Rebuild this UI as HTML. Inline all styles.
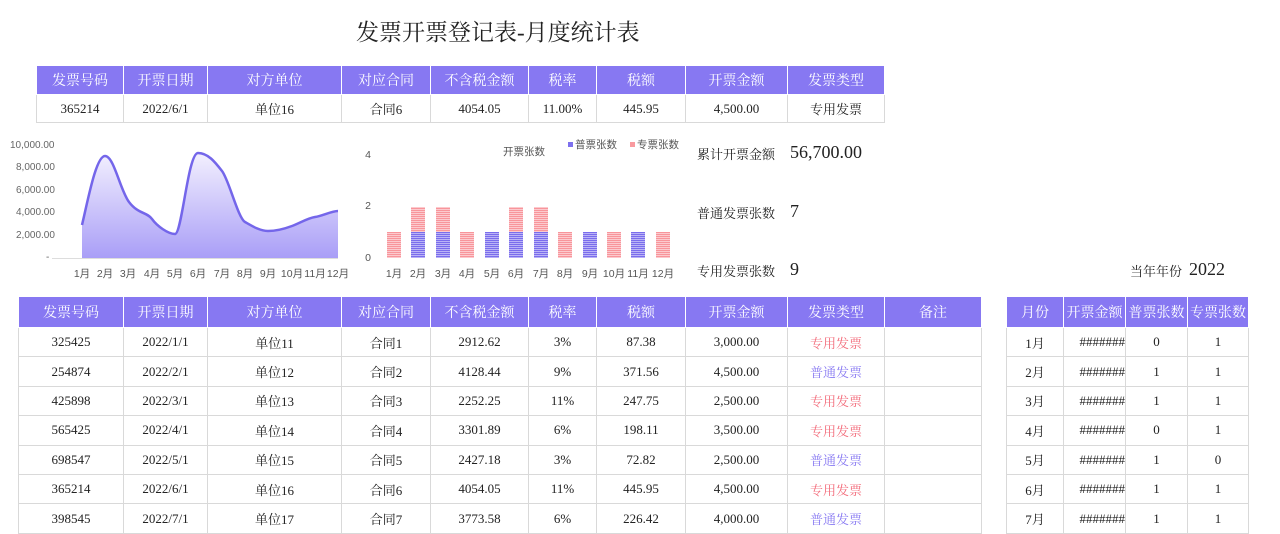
<!DOCTYPE html>
<html><head><meta charset="utf-8">
<style>
body{margin:0;width:1280px;height:530px;overflow:hidden;background:#fff;font-family:"Liberation Serif","Noto Serif CJK SC",serif;color:#222;position:relative}
.t{position:absolute;border-collapse:collapse;table-layout:fixed;font-size:13px}
.t td{border:1px solid #d9d9d9;text-align:center;padding:0;white-space:nowrap;overflow:hidden}
.t tr.h td{background:#8778f2;color:#fff;border-color:#fff;font-size:14px}
.p{color:#f36b7a}.b{color:#8778f2}
.a{position:absolute;font-size:13px;white-space:nowrap}
.s{font-family:"Liberation Sans","Noto Sans CJK SC",sans-serif;font-size:10px;color:#666;position:absolute}
</style></head><body>
<div class="a" style="left:356px;top:14px;font-size:23px;">发票开票登记表-月度统计表</div>

<table class="t" style="left:36px;top:65px;width:848px">
<colgroup><col style="width:87px"><col style="width:84px"><col style="width:134px"><col style="width:89px"><col style="width:98px"><col style="width:68px"><col style="width:89px"><col style="width:102px"><col style="width:97px"></colgroup>
<tr class="h" style="height:29px"><td>发票号码</td><td>开票日期</td><td>对方单位</td><td>对应合同</td><td>不含税金额</td><td>税率</td><td>税额</td><td>开票金额</td><td>发票类型</td></tr>
<tr style="height:28px"><td>365214</td><td>2022/6/1</td><td>单位16</td><td>合同6</td><td>4054.05</td><td>11.00%</td><td>445.95</td><td>4,500.00</td><td>专用发票</td></tr>
</table>

<div class="s" style="left:10px;top:140px">10,000.00</div>
<div class="s" style="left:16px;top:162px">8,000.00</div>
<div class="s" style="left:16px;top:185px">6,000.00</div>
<div class="s" style="left:16px;top:207px">4,000.00</div>
<div class="s" style="left:16px;top:230px">2,000.00</div>
<div class="s" style="left:46px;top:252px">-</div>
<svg style="position:absolute;left:0;top:0" width="700" height="290">
<defs><linearGradient id="g" x1="0" y1="0" x2="0" y2="1"><stop offset="0" stop-color="#f3f0fe"/><stop offset="1" stop-color="#a99ef7"/></linearGradient>
<pattern id="pp" width="4" height="2" patternUnits="userSpaceOnUse"><rect width="4" height="2" fill="#fde2e4"/><rect width="4" height="1.3" fill="#f8959b"/></pattern>
<pattern id="pb" width="4" height="2" patternUnits="userSpaceOnUse"><rect width="4" height="2" fill="#d6d1fb"/><rect width="4" height="1.3" fill="#7a6dec"/></pattern></defs>
<path d="M82,225 C88,200 96,156 105,156 S120,190 129,202 S147,212 152,219 S168,234 175,234 S188,153 198,153 S215,162 222,171 S238,218 245,222 S260,231 268,231 S284,229 292,226 S308,218 315,217 S332,211 338,211 L338,258 L82,258 Z" fill="url(#g)"/>
<path d="M82,225 C88,200 96,156 105,156 S120,190 129,202 S147,212 152,219 S168,234 175,234 S188,153 198,153 S215,162 222,171 S238,218 245,222 S260,231 268,231 S284,229 292,226 S308,218 315,217 S332,211 338,211" fill="none" stroke="#7466ea" stroke-width="2.5"/>
<line x1="52" y1="258.5" x2="338" y2="258.5" stroke="#ddd"/>
<g font-family="Liberation Sans,Noto Sans CJK SC,sans-serif" font-size="10.5" fill="#555" text-anchor="middle">
<text x="82" y="277">1月</text><text x="105" y="277">2月</text><text x="128" y="277">3月</text><text x="152" y="277">4月</text><text x="175" y="277">5月</text><text x="198" y="277">6月</text><text x="222" y="277">7月</text><text x="245" y="277">8月</text><text x="268" y="277">9月</text><text x="292" y="277">10月</text><text x="315" y="277">11月</text><text x="338" y="277">12月</text>
<text x="394" y="277">1月</text><text x="418" y="277">2月</text><text x="443" y="277">3月</text><text x="467" y="277">4月</text><text x="492" y="277">5月</text><text x="516" y="277">6月</text><text x="541" y="277">7月</text><text x="565" y="277">8月</text><text x="590" y="277">9月</text><text x="614" y="277">10月</text><text x="638" y="277">11月</text><text x="663" y="277">12月</text>
<text x="368" y="158">4</text><text x="368" y="209">2</text><text x="368" y="261">0</text>
<text x="524" y="155">开票张数</text>
<text x="596" y="148">普票张数</text><text x="658" y="148">专票张数</text>
</g>
<rect x="568" y="142" width="5" height="5" fill="#7d70ee"/><rect x="630" y="142" width="5" height="5" fill="#f99a9f"/>
<g>
<rect x="387" y="232" width="14" height="26" fill="url(#pp)"/>
<rect x="411" y="232" width="14" height="26" fill="url(#pb)"/><rect x="411" y="207" width="14" height="25" fill="url(#pp)"/>
<rect x="436" y="232" width="14" height="26" fill="url(#pb)"/><rect x="436" y="207" width="14" height="25" fill="url(#pp)"/>
<rect x="460" y="232" width="14" height="26" fill="url(#pp)"/>
<rect x="485" y="232" width="14" height="26" fill="url(#pb)"/>
<rect x="509" y="232" width="14" height="26" fill="url(#pb)"/><rect x="509" y="207" width="14" height="25" fill="url(#pp)"/>
<rect x="534" y="232" width="14" height="26" fill="url(#pb)"/><rect x="534" y="207" width="14" height="25" fill="url(#pp)"/>
<rect x="558" y="232" width="14" height="26" fill="url(#pp)"/>
<rect x="583" y="232" width="14" height="26" fill="url(#pb)"/>
<rect x="607" y="232" width="14" height="26" fill="url(#pp)"/>
<rect x="631" y="232" width="14" height="26" fill="url(#pb)"/>
<rect x="656" y="232" width="14" height="26" fill="url(#pp)"/>
</g>
</svg>

<div class="a" style="left:697px;top:144px">累计开票金额</div>
<div class="a" style="left:790px;top:142px;font-size:18px">56,700.00</div>
<div class="a" style="left:697px;top:203px">普通发票张数</div>
<div class="a" style="left:790px;top:201px;font-size:18px">7</div>
<div class="a" style="left:697px;top:261px">专用发票张数</div>
<div class="a" style="left:790px;top:259px;font-size:18px">9</div>
<div class="a" style="left:1130px;top:261px">当年年份</div>
<div class="a" style="left:1189px;top:259px;font-size:18px">2022</div>

<table class="t" style="left:18px;top:296px;width:963px">
<colgroup><col style="width:105px"><col style="width:84px"><col style="width:134px"><col style="width:89px"><col style="width:98px"><col style="width:68px"><col style="width:89px"><col style="width:102px"><col style="width:97px"><col style="width:97px"></colgroup>
<tr class="h" style="height:31px"><td>发票号码</td><td>开票日期</td><td>对方单位</td><td>对应合同</td><td>不含税金额</td><td>税率</td><td>税额</td><td>开票金额</td><td>发票类型</td><td>备注</td></tr>
<tr style="height:29.4px"><td>325425</td><td>2022/1/1</td><td>单位11</td><td>合同1</td><td>2912.62</td><td>3%</td><td>87.38</td><td>3,000.00</td><td class="p">专用发票</td><td></td></tr>
<tr style="height:29.4px"><td>254874</td><td>2022/2/1</td><td>单位12</td><td>合同2</td><td>4128.44</td><td>9%</td><td>371.56</td><td>4,500.00</td><td class="b">普通发票</td><td></td></tr>
<tr style="height:29.4px"><td>425898</td><td>2022/3/1</td><td>单位13</td><td>合同3</td><td>2252.25</td><td>11%</td><td>247.75</td><td>2,500.00</td><td class="p">专用发票</td><td></td></tr>
<tr style="height:29.4px"><td>565425</td><td>2022/4/1</td><td>单位14</td><td>合同4</td><td>3301.89</td><td>6%</td><td>198.11</td><td>3,500.00</td><td class="p">专用发票</td><td></td></tr>
<tr style="height:29.4px"><td>698547</td><td>2022/5/1</td><td>单位15</td><td>合同5</td><td>2427.18</td><td>3%</td><td>72.82</td><td>2,500.00</td><td class="b">普通发票</td><td></td></tr>
<tr style="height:29.4px"><td>365214</td><td>2022/6/1</td><td>单位16</td><td>合同6</td><td>4054.05</td><td>11%</td><td>445.95</td><td>4,500.00</td><td class="p">专用发票</td><td></td></tr>
<tr style="height:29.4px"><td>398545</td><td>2022/7/1</td><td>单位17</td><td>合同7</td><td>3773.58</td><td>6%</td><td>226.42</td><td>4,000.00</td><td class="b">普通发票</td><td></td></tr>
</table>

<table class="t" style="left:1006px;top:296px;width:242px">
<colgroup><col style="width:57px"><col style="width:62px"><col style="width:62px"><col style="width:61px"></colgroup>
<tr class="h" style="height:31px"><td>月份</td><td>开票金额</td><td>普票张数</td><td>专票张数</td></tr>
<tr style="height:29.4px"><td>1月</td><td style="text-align:right">#######</td><td>0</td><td>1</td></tr>
<tr style="height:29.4px"><td>2月</td><td style="text-align:right">#######</td><td>1</td><td>1</td></tr>
<tr style="height:29.4px"><td>3月</td><td style="text-align:right">#######</td><td>1</td><td>1</td></tr>
<tr style="height:29.4px"><td>4月</td><td style="text-align:right">#######</td><td>0</td><td>1</td></tr>
<tr style="height:29.4px"><td>5月</td><td style="text-align:right">#######</td><td>1</td><td>0</td></tr>
<tr style="height:29.4px"><td>6月</td><td style="text-align:right">#######</td><td>1</td><td>1</td></tr>
<tr style="height:29.4px"><td>7月</td><td style="text-align:right">#######</td><td>1</td><td>1</td></tr>
</table>
</body></html>
